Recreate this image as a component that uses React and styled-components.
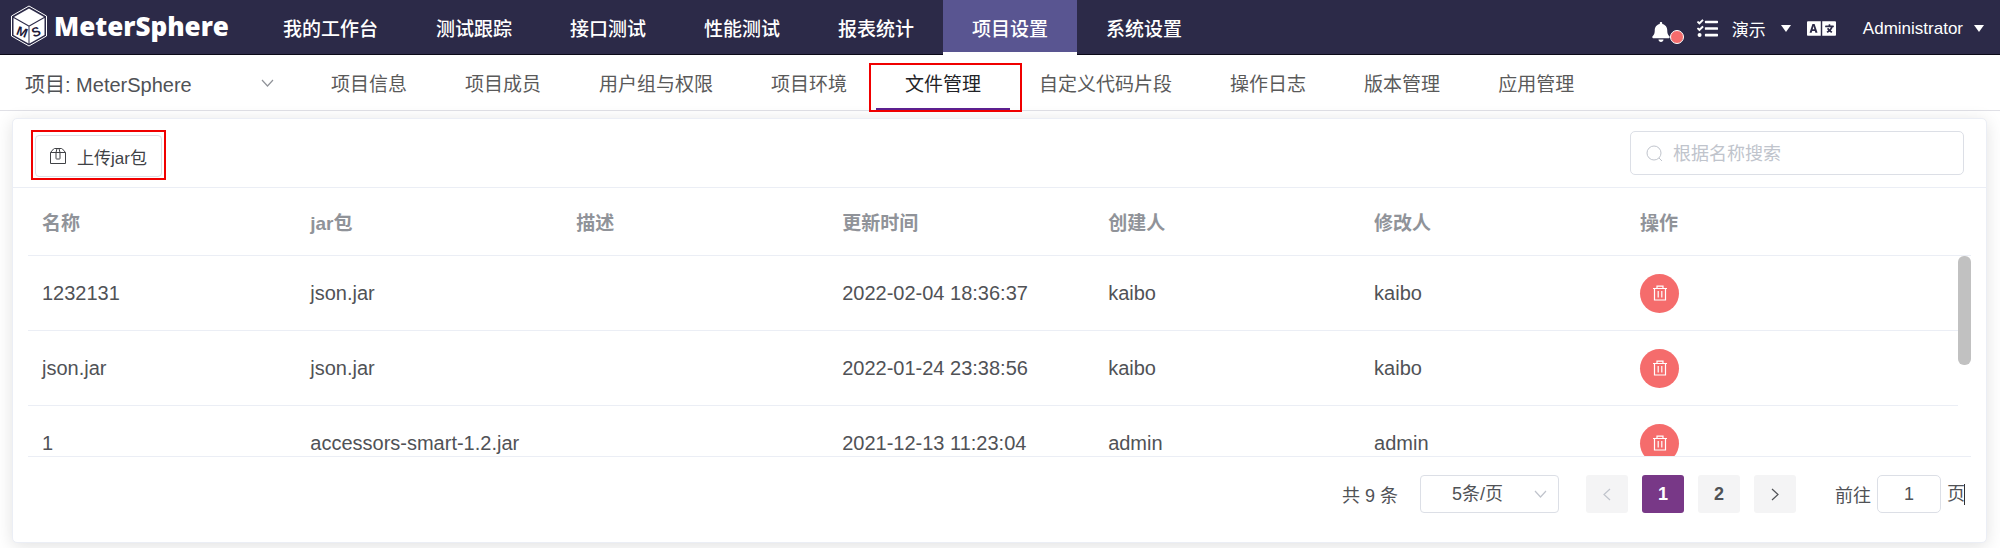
import React from "react";
import styled, { createGlobalStyle, css } from "styled-components";
import { FaBell, FaTasks, FaLanguage } from "react-icons/fa";

const GlobalStyle = createGlobalStyle`
  *, *::before, *::after { box-sizing: border-box; }
  body {
    margin: 0;
    background: #fff;
    color: #606266;
    font-family: "Liberation Sans", "Noto Sans CJK SC", sans-serif;
    font-size: 19px;
  }
  button, input, select { font: inherit; color: inherit; margin: 0; }
  button { cursor: pointer; }
`;

const Page = styled.div`
  display: flex;
  flex-direction: column;
`;

/* ---------- top bar ---------- */

const TopBar = styled.header`
  display: flex;
  height: 55px;
  background: #2c2a48;
  box-shadow: inset 0 -1px 0 #0b0918;
  color: #fff;
`;

const Brand = styled.a`
  display: flex;
  align-items: center;
  gap: 6px;
  width: 254px;
  padding: 0 0 3px 10px;
  color: #fff;
  text-decoration: none;
  font: 800 26px "Open Sans", sans-serif;
`;

const MainNav = styled.nav`
  display: flex;
  flex: 1;
`;

const MainLink = styled.a`
  display: flex;
  align-items: center;
  padding: 0 29px;
  color: #fff;
  text-decoration: none;
  font-weight: 500;
  ${(p) => p.$active && css`
    background: #595591;
    border-bottom: 3px solid #fff;
    padding-top: 3px;
  `}
`;

const Tools = styled.div`
  display: flex;
  align-items: center;
  padding: 2px 16px 0 0;
  font-size: 17px;
`;

const ToolButton = styled.button`
  position: relative;
  display: flex;
  align-items: center;
  gap: ${(p) => p.$gap || 0}px;
  margin-left: ${(p) => p.$before || 0}px;
  padding: 0;
  border: 0;
  background: none;
  color: #fff;
  white-space: nowrap;
`;

const BellButton = styled(ToolButton)`
  padding-top: 7px;
`;

const AlertDot = styled.span`
  position: absolute;
  left: 19px;
  bottom: -2px;
  width: 14px;
  height: 14px;
  border: 1px solid #fff;
  border-radius: 50%;
  background: #f56c6c;
`;

const Caret = styled.span`
  border: 5px solid transparent;
  border-top: 7px solid #fff;
  border-bottom: 0;
`;

/* ---------- project bar ---------- */

const ProjectBar = styled.div`
  display: flex;
  height: 56px;
  border-bottom: 1px solid #e0e0e6;
`;

const ProjectPicker = styled.label`
  display: flex;
  align-items: center;
  width: 302px;
  padding: 5px 28px 0 25px;
  color: #909399;
  font-size: 20px;
  svg { margin-bottom: 5px; }
`;

const PlainSelect = styled.select`
  flex: 1;
  min-width: 0;
  appearance: none;
  border: 0;
  padding: 0;
  background: none;
  outline: 0;
  color: #505256;
`;

const TabLink = styled.a`
  position: relative;
  display: flex;
  align-items: center;
  padding: 0 29px 1px;
  color: ${(p) => (p.$active ? "#222327" : "#5a5a5a")};
  text-decoration: none;
  ${(p) => p.$active && css`
    box-shadow: inset 0 -2px 0 #5c1f8f;
  `}
`;

const Mark = styled.span`
  position: absolute;
  inset: ${(p) => p.$inset};
  border: 2px solid #f00000;
  pointer-events: none;
`;

/* ---------- card ---------- */

const Card = styled.main`
  margin: 7px 13px 6px 12px;
  border: 1px solid #ebeef5;
  border-radius: 5px;
  background: #fff;
  box-shadow: 0 3px 17px rgba(0, 0, 0, 0.12);
`;

const CardHead = styled.div`
  display: flex;
  align-items: center;
  justify-content: space-between;
  height: 69px;
  padding: 0 22px;
  border-bottom: 1px solid #ebeef5;
`;

const UploadButton = styled.button`
  position: relative;
  display: flex;
  align-items: center;
  gap: 11px;
  height: 42px;
  margin-top: 6px;
  padding: 0 14px;
  border: 1px solid #dcdfe6;
  border-radius: 4px;
  background: #fff;
  color: #404246;
  font-size: 17px;
`;

const SearchBox = styled.label`
  display: flex;
  align-items: center;
  gap: 10px;
  width: 334px;
  height: 44px;
  padding: 0 15px;
  border: 1px solid #dcdfe6;
  border-radius: 5px;
  color: #c0c4cc;
`;

const SearchInput = styled.input`
  flex: 1;
  min-width: 0;
  border: 0;
  padding: 2px 0 0;
  outline: 0;
  font-size: 18px;
  &::placeholder { color: #c0c4cc; opacity: 1; }
`;

const TableArea = styled.section`
  margin: 0 15px;
  border-bottom: 1px solid #ebeef5;
`;

const TableHead = styled.div`
  padding-right: 13px;
  border-bottom: 1px solid #ebeef5;
`;

const TableBody = styled.div`
  display: flex;
  height: 200px;
`;

const Viewport = styled.div`
  flex: 1;
  overflow: hidden;
`;

const Track = styled.div`
  width: 13px;
`;

const Thumb = styled.div`
  height: 109px;
  border-radius: 6px;
  background: #c1c1c1;
`;

const Table = styled.table`
  width: 100%;
  table-layout: fixed;
  border-collapse: separate;
  border-spacing: 0;
`;

const HeadCell = styled.th`
  height: 67px;
  padding: 0 14px;
  text-align: left;
  color: #909399;
  font-weight: 700;
`;

const Cell = styled.td`
  height: 75px;
  padding: 0 14px;
  border-bottom: 1px solid #ebeef5;
  color: #505256;
  font-size: 20px;
`;

const DeleteButton = styled.button`
  display: flex;
  align-items: center;
  justify-content: center;
  width: 39px;
  height: 39px;
  padding: 0;
  border: 0;
  border-radius: 50%;
  background: #f56c6c;
  color: #fff;
`;

/* ---------- pagination ---------- */

const Pager = styled.nav`
  display: flex;
  align-items: center;
  justify-content: flex-end;
  padding: 18px 21px 29px;
  font-size: 18px;
  color: #505256;
`;

const PageSize = styled.label`
  display: flex;
  align-items: center;
  width: 139px;
  height: 38px;
  margin: 0 27px 0 22px;
  padding: 0 11px 0 31px;
  border: 1px solid #dcdfe6;
  border-radius: 4px;
  color: #c0c4cc;
`;

const PageButtons = styled.div`
  display: flex;
  gap: 14px;
`;

const PageButton = styled.button`
  display: flex;
  align-items: center;
  justify-content: center;
  width: 42px;
  height: 38px;
  padding: 0;
  border: 0;
  border-radius: 3px;
  background: ${(p) => (p.$current ? "#783887" : "#f4f4f5")};
  color: ${(p) => (p.$current ? "#fff" : p.disabled ? "#c0c4cc" : "#505256")};
  font-weight: 700;
`;

const Jump = styled.label`
  display: flex;
  align-items: center;
  gap: 6px;
  margin-left: 39px;
`;

const JumpInput = styled.input`
  width: 64px;
  height: 38px;
  padding: 0;
  border: 1px solid #dcdfe6;
  border-radius: 5px;
  text-align: center;
`;

const JumpUnit = styled.span`
  width: 18px;
  box-shadow: inset -1px 0 0 #303133;
  line-height: 21px;
`;

/* ---------- drawings ---------- */

const Cube = () => (
  <svg width="38" height="42" viewBox="0 0 38 42" aria-hidden="true">
    <path d="M19 1 36.5 11v20L19 41 1.5 31V11z" fill="none" stroke="#fff" strokeWidth="1" />
    <path d="M19 3.500 34 12 19 20.500 4 12z" fill="#fff" />
    <path d="M3.500 13 18.500 21.500v17L3.500 30zM34.500 13 19.500 21.500v17L34.500 30z" fill="#fff" />
    <g fill="#1f1b3a" fontFamily="Liberation Sans, sans-serif" fontWeight="700" fontSize="13" textAnchor="middle">
      <text transform="translate(10.500 31) rotate(20)">M</text>
      <text transform="translate(27.500 31) rotate(-20)">S</text>
    </g>
  </svg>
);

const Chevron = ({ d, w = 13, h = 8 }) => (
  <svg width={w} height={h} viewBox={`0 0 ${w} ${h}`} fill="none" stroke="currentColor" strokeWidth="1.200" aria-hidden="true">
    <path d={d} />
  </svg>
);

const DOWN = "M1 1 6.500 7 12 1";

const BoxIcon = () => (
  <svg width="16" height="16" viewBox="0 0 16 16" fill="none" stroke="currentColor" strokeWidth="1" aria-hidden="true">
    <path d="M.5 4.500h15v11H.5zM.5 4.500 3.500 1Q4 .5 4.500.5h7q.5 0 1 .5l3 3.500" />
    <path d="M6 4.500 7 .5M10 4.500 9 .5M6 4.500v6q0 .5.500.500h3q.500 0 .500-.500v-6" />
  </svg>
);

const SearchIcon = () => (
  <svg width="17" height="17" viewBox="0 0 17 17" fill="none" stroke="currentColor" strokeWidth="1" aria-hidden="true">
    <circle cx="8" cy="8" r="7" />
    <path d="m13 13 3 3" />
  </svg>
);

const TrashIcon = () => (
  <svg width="16" height="16" viewBox="0 0 16 16" fill="none" stroke="currentColor" strokeWidth="1.200" aria-hidden="true">
    <path d="M1 3.500h14M5 3.500V1.200h6v2.300M2.500 3.500v11.500h11V3.500M6.200 6v6.500M9.800 6v6.500" />
  </svg>
);

/* ---------- data ---------- */

const mainLinks = ["我的工作台", "测试跟踪", "接口测试", "性能测试", "报表统计", "项目设置", "系统设置"];
const tabs = ["项目信息", "项目成员", "用户组与权限", "项目环境", "文件管理", "自定义代码片段", "操作日志", "版本管理", "应用管理"];
const columns = ["名称", "jar包", "描述", "更新时间", "创建人", "修改人", "操作"];
const files = [
  ["1232131", "json.jar", "", "2022-02-04 18:36:37", "kaibo", "kaibo"],
  ["json.jar", "json.jar", "", "2022-01-24 23:38:56", "kaibo", "kaibo"],
  ["1", "accessors-smart-1.2.jar", "", "2021-12-13 11:23:04", "admin", "admin"],
];
const columnShares = ["13.9%", "13.78%", "13.78%", "13.78%", "13.78%", "13.78%", "17.2%"];

const Columns = () => (
  <colgroup>
    {columnShares.map((share, i) => <col key={i} width={share} />)}
  </colgroup>
);

export default function App() {
  return (
    <Page>
      <GlobalStyle />
      <TopBar>
        <Brand href="#home"><Cube />MeterSphere</Brand>
        <MainNav aria-label="主导航">
          {mainLinks.map((t) => (
            <MainLink key={t} href="#" $active={t === "项目设置"}>{t}</MainLink>
          ))}
        </MainNav>
        <Tools>
          <BellButton aria-label="通知"><FaBell size={20} /><AlertDot /></BellButton>
          <ToolButton aria-label="任务" $before={26}><FaTasks size={21} /></ToolButton>
          <ToolButton $before={14} $gap={15}>演示<Caret /></ToolButton>
          <ToolButton aria-label="语言" $before={16}><FaLanguage size={29} /></ToolButton>
          <ToolButton $before={27} $gap={11}>Administrator<Caret /></ToolButton>
        </Tools>
      </TopBar>

      <ProjectBar>
        <ProjectPicker>
          <PlainSelect aria-label="项目">
            <option>项目: MeterSphere</option>
          </PlainSelect>
          <Chevron d={DOWN} />
        </ProjectPicker>
        {tabs.map((t) => (
          <TabLink key={t} href="#" $active={t === "文件管理"}>
            {t}
            {t === "文件管理" && <Mark $inset="8px -12px -2px -7px" />}
          </TabLink>
        ))}
      </ProjectBar>

      <Card>
        <CardHead>
          <UploadButton>
            <BoxIcon />上传jar包
            <Mark $inset="-6px -5px -4px -5px" />
          </UploadButton>
          <SearchBox>
            <SearchIcon />
            <SearchInput placeholder="根据名称搜索" aria-label="根据名称搜索" />
          </SearchBox>
        </CardHead>

        <TableArea>
          <TableHead>
            <Table>
              <Columns />
              <thead>
                <tr>{columns.map((c) => <HeadCell key={c} scope="col">{c}</HeadCell>)}</tr>
              </thead>
            </Table>
          </TableHead>
          <TableBody>
            <Viewport>
              <Table>
                <Columns />
                <tbody>
                  {files.map((row) => (
                    <tr key={row[3]}>
                      {row.map((v, i) => <Cell key={i}>{v}</Cell>)}
                      <Cell><DeleteButton aria-label="删除"><TrashIcon /></DeleteButton></Cell>
                    </tr>
                  ))}
                </tbody>
              </Table>
            </Viewport>
            <Track><Thumb /></Track>
          </TableBody>
        </TableArea>

        <Pager aria-label="分页">
          <span>共 9 条</span>
          <PageSize>
            <PlainSelect aria-label="每页条数"><option>5条/页</option></PlainSelect>
            <Chevron d={DOWN} />
          </PageSize>
          <PageButtons>
            <PageButton disabled aria-label="上一页"><Chevron w={8} h={13} d="M7 1 1 6.500 7 12" /></PageButton>
            <PageButton $current>1</PageButton>
            <PageButton>2</PageButton>
            <PageButton aria-label="下一页"><Chevron w={8} h={13} d="M1 1 7 6.500 1 12" /></PageButton>
          </PageButtons>
          <Jump>
            前往
            <JumpInput defaultValue="1" />
            <JumpUnit>页</JumpUnit>
          </Jump>
        </Pager>
      </Card>
    </Page>
  );
}
